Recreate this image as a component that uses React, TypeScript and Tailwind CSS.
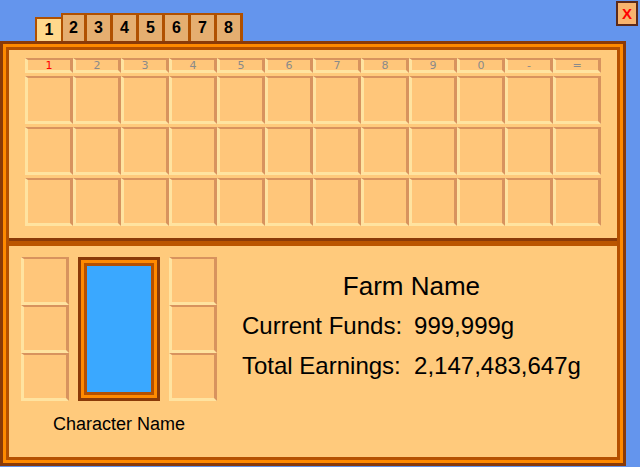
import React from 'react'

const SLOT_KEYS = ['1', '2', '3', '4', '5', '6', '7', '8', '9', '0', '-', '=']

// bevelled inventory slot: dark tan top/right, light cream bottom/left
const bevel =
  'border-t-2 border-r-[3px] border-b-[3px] border-l-[3px] border-t-[#D8935E] border-r-[#D8935E] border-b-[#FFE3A0] border-l-[#FFE3A0] bg-[#FFC67A]'

function Slot({ className = '' }: { className?: string }) {
  return <div className={`w-12 h-12 ${bevel} ${className}`} />
}

function Tabs() {
  return (
    <div className="flex items-end h-[41px] pl-[35px]">
      <div className="w-[26px] h-6 border-t-2 border-l-2 border-[#B05000] bg-[#FFD88C] flex items-center justify-center text-[16px] font-bold text-black">
        1
      </div>
      {[2, 3, 4, 5, 6, 7, 8].map((n) => (
        <div
          key={n}
          className={`w-[26px] h-7 border-t-2 border-r-[3px] border-[#B05000] bg-[#E5AE70] flex items-center justify-center text-[16px] font-bold text-black ${
            n === 2 ? 'border-l-2' : ''
          }`}
        >
          {n}
        </div>
      ))}
    </div>
  )
}

export default function App() {
  return (
    <div className="relative w-[640px] h-[467px] bg-[#6495ED] font-['Liberation_Sans',Arial,sans-serif] text-black overflow-hidden">
      {/* Tabs + close */}
      <div className="flex justify-between">
        <Tabs />
        <button className="mt-px mr-[2px] w-[22px] h-[25px] border-2 border-[#5C2A1A] bg-[#F7B46E] flex items-center justify-center text-[15px] font-bold text-[#FF0000] leading-none">
          X
        </button>
      </div>

      {/* Main frame */}
      <div className="w-[626px] h-[425px] border-[3px] border-[#8A3A08]">
        <div className="h-full border-[3px] border-[#FF8A00]">
          <div className="h-full border-[3px] border-[#B55000] bg-[#FFCA7C] flex flex-col">
            {/* Toolbar / inventory grid */}
            <div className="h-[188px] pt-2 px-4 flex flex-col gap-[3px]">
              <div className="flex">
                {SLOT_KEYS.map((k, i) => (
                  <div
                    key={k}
                    className={`w-12 h-[15px] ${bevel} flex items-center justify-center font-['DejaVu_Sans',sans-serif] text-[11px] leading-none ${
                      i === 0 ? 'text-[#FF0000]' : 'text-[#8A8A8A]'
                    }`}
                  >
                    {k}
                  </div>
                ))}
              </div>
              {[0, 1, 2].map((r) => (
                <div key={r} className="flex">
                  {SLOT_KEYS.map((k) => (
                    <Slot key={k} />
                  ))}
                </div>
              ))}
            </div>

            {/* Divider */}
            <div className="h-[3px] bg-[#8A3A08]" />
            <div className="h-[5px] bg-[#BA5500]" />

            {/* Character panel */}
            <div className="flex-1 flex items-start pl-3 pt-[11px]">
              <div className="flex flex-col items-center">
                <div className="flex gap-[9px]">
                  <div className="flex flex-col">
                    <Slot />
                    <Slot />
                    <Slot />
                  </div>
                  <div className="w-[82px] h-[144px] border-[3px] border-[#8A3A08]">
                    <div className="h-full border-[3px] border-[#FF8A00]">
                      <div className="h-full border-[3px] border-[#B55000] bg-[#3AA8FF]" />
                    </div>
                  </div>
                  <div className="flex flex-col">
                    <Slot />
                    <Slot />
                    <Slot />
                  </div>
                </div>
                <div className="mt-[13px] text-[18px] leading-[21px]">Character Name</div>
              </div>

              <div className="ml-[25px] mt-[9px] grid grid-cols-[auto_auto] gap-x-3">
                <div className="col-span-2 h-10 flex items-center justify-center text-[26px]">
                  Farm Name
                </div>
                <div className="h-10 flex items-center text-[24px]">Current Funds:</div>
                <div className="h-10 flex items-center text-[24px]">999,999g</div>
                <div className="h-10 flex items-center text-[24px]">Total Earnings:</div>
                <div className="h-10 flex items-center text-[24px]">2,147,483,647g</div>
              </div>
            </div>
          </div>
        </div>
      </div>
    </div>
  )
}
